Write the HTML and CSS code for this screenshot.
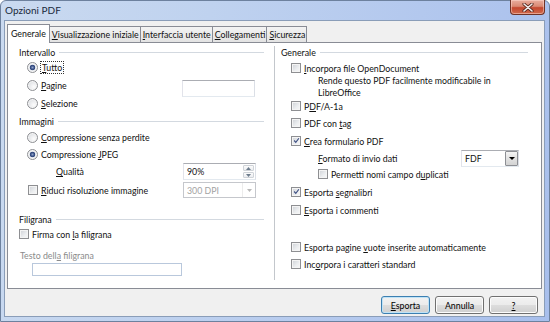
FILE: index.html
```html
<!DOCTYPE html>
<html lang="it">
<head>
<meta charset="utf-8">
<title>Opzioni PDF</title>
<link rel="stylesheet" href="styles.css">
</head>
<body>
<div class="window">
  <div class="titlebar">
    <span class="title">Opzioni PDF</span>
    <div class="close">
      <svg width="12" height="9" viewBox="0 0 12 9"><path d="M2 1 L10 8 M10 1 L2 8" stroke="#5a2a20" stroke-width="3.2" stroke-linecap="round"/><path d="M2 1 L10 8 M10 1 L2 8" stroke="#f4eeee" stroke-width="1.6" stroke-linecap="round"/></svg>
    </div>
  </div>
  <div class="client">
    <div class="tabs">
      <div class="tab active">Generale</div>
      <div class="tab"><u>V</u>isualizzazione iniziale</div>
      <div class="tab"><u>I</u>nterfaccia utente</div>
      <div class="tab"><u>C</u>ollegamenti</div>
      <div class="tab"><u>S</u>icurezza</div>
    </div>
    <div class="panel">
      <div class="col left">
        <div class="hdr"><span>Intervallo</span><i class="line"></i></div>
        <div class="row in8"><span class="radio on"></span><span class="focus"><u>T</u>utto</span></div>
        <div class="row in8"><span class="radio"></span><span><u>P</u>agine</span><span class="field pages"></span></div>
        <div class="row in8"><span class="radio"></span><span><u>S</u>elezione</span></div>

        <div class="hdr h-img"><span>Immagini</span><i class="line"></i></div>
        <div class="row in8 r-comp"><span class="radio"></span><span><u>C</u>ompressione senza perdite</span></div>
        <div class="row in8 h16"><span class="radio on"></span><span>Compressione <u>J</u>PEG</span></div>
        <div class="row r-qual"><span class="qlabel"><u>Q</u>ualità</span>
          <span class="field spin"><span class="val">90%</span><span class="spinbtns"><span class="sb"><svg width="5" height="3" viewBox="0 0 5 3"><path d="M0 3 L2.5 0 L5 3Z" fill="#6d7c8c"/></svg></span><span class="sb"><svg width="5" height="3" viewBox="0 0 5 3"><path d="M0 0 L2.5 3 L5 0Z" fill="#6d7c8c"/></svg></span></span></span>
        </div>
        <div class="row in9"><span class="check"></span><span><u>R</u>iduci risoluzione immagine</span>
          <span class="field combo dis"><span class="val">300 DPI</span><span class="arr"><svg width="5" height="3" viewBox="0 0 5 3"><path d="M0 0 L2.5 3 L5 0Z" fill="#b8b8b8"/></svg></span></span>
        </div>

        <div class="hdr h-fil"><span>Filigrana</span><i class="line"></i></div>
        <div class="row h16 r-firma"><span class="check"></span><span>Firma con <u>l</u>a filigrana</span></div>
        <div class="row h14 r-testo grey"><span>Testo dell<u>a</u> filigrana</span></div>
        <div class="field wm"></div>
      </div>
      <div class="vsep"></div>
      <div class="col right">
        <div class="hdr"><span>Generale</span><i class="line"></i></div>
        <div class="row in10 h16 r-inc"><span class="check"></span><span><u>I</u>ncorpora file OpenDocument</span></div>
        <div class="desc">Rende questo PDF facilmente modificabile in<br>LibreOffice</div>
        <div class="row in10 h16 r-pdfa"><span class="check"></span><span>P<u>D</u>F/A-1a</span></div>
        <div class="row in10"><span class="check"></span><span>PDF con <u>t</u>ag</span></div>
        <div class="row in10"><span class="check on"><svg width="9" height="9" viewBox="0 0 9 9"><path d="M1.5 4.5 L3.6 6.8 L7.6 1.6" fill="none" stroke="#3d4f82" stroke-width="1.5"/></svg></span><span><u>C</u>rea formulario PDF</span></div>
        <div class="row h16 in37"><span><u>F</u>ormato di invio dati</span>
          <span class="field combo fdf"><span class="val">FDF</span><span class="arr btn"><svg width="6" height="3" viewBox="0 0 6 3"><path d="M0 0 L3 3 L6 0Z" fill="#000"/></svg></span></span>
        </div>
        <div class="row h16 in37"><span class="check"></span><span>Permetti nomi campo d<u>u</u>plicati</span></div>
        <div class="row in10 r-seg"><span class="check on"><svg width="9" height="9" viewBox="0 0 9 9"><path d="M1.5 4.5 L3.6 6.8 L7.6 1.6" fill="none" stroke="#3d4f82" stroke-width="1.5"/></svg></span><span>Esporta <u>s</u>egnalibri</span></div>
        <div class="row in10"><span class="check"></span><span><u>E</u>sporta i commenti</span></div>
        <div class="row in10 r-vuote"><span class="check"></span><span>Esporta pagine <u>v</u>uote inserite automaticamente</span></div>
        <div class="row in10 h16"><span class="check"></span><span>Inc<u>o</u>rpora i caratteri standard</span></div>
      </div>
    </div>
    <div class="buttons">
      <button class="btn-w default"><u>E</u>sporta</button>
      <button class="btn-w">Annulla</button>
      <button class="btn-w"><u>?</u></button>
    </div>
  </div>
</div>
</body>
</html>
```

FILE: styles.css
```css
* { box-sizing: border-box; }
html, body { margin: 0; padding: 0; }
body {
  width: 550px;
  height: 322px;
  overflow: hidden;
  font-family: Lato, "Open Sans", sans-serif;
  font-size: 8.8px;
  color: #111;
  background: #fff;
}
u { text-decoration: underline; text-underline-offset: 1px; }

.window {
  width: 550px;
  height: 322px;
  border: 1px solid #6d819e;
  border-radius: 6px 6px 0 0;
  background: linear-gradient(100deg, #cadaf0 0%, #bfd2ef 35%, #b3c8ee 70%, #a8bfec 100%);
  display: flex;
  flex-direction: column;
}

.titlebar {
  height: 19px;
  display: flex;
  align-items: flex-start;
  padding-left: 4px;
}
.title {
  font-size: 10px;
  line-height: 19px;
  color: #1b2a3c;
}
.close {
  margin-left: auto;
  margin-right: 4px;
  margin-top: -1px;
  width: 35px;
  height: 15px;
  border: 1px solid #6e3226;
  border-top: none;
  border-radius: 0 0 4px 4px;
  background: linear-gradient(#e9ad9e 0%, #da8a74 45%, #c4472f 55%, #cf6a4c 100%);
  box-shadow: inset 0 0 0 1px rgba(255,220,210,0.5);
  display: flex;
  align-items: center;
  justify-content: center;
}

.client {
  margin: 0 4px 0 3px;
  height: 297px;
  border: 1px solid #8a9db8;
  background: #f0f0f0;
  display: flex;
  flex-direction: column;
}

.tabs {
  display: flex;
  align-items: flex-end;
  height: 21px;
  padding: 3px 0 0 2px;
}
.tab {
  height: 16px;
  padding: 0 1px 0 2px;
  border: 1px solid #898c95;
  border-bottom: none;
  border-left: none;
  background: linear-gradient(#f3f3f3, #e3e3e3);
  line-height: 15px;
  white-space: nowrap;
}
.tab.active {
  position: relative;
  z-index: 1;
  height: 19px;
  margin-bottom: -1px;
  border-left: 1px solid #898c95;
  padding: 0 3px;
  background: #fff;
  line-height: 18px;
}

.panel {
  margin: 0 2px 0 2px;
  height: 247px;
  border: 1px solid #898c95;
  background: #fff;
  display: flex;
}
.col { display: flex; flex-direction: column; }
.col.left { width: 266px; padding: 3px 10px 0 11px; }
.col.right { flex: 1; padding: 3px 13px 0 6px; }
.vsep { width: 1px; background: #c3c7cc; margin: 3px 0 8px; }

.hdr {
  height: 12px;
  display: flex;
  align-items: center;
  white-space: nowrap;
}
.hdr .line {
  flex: 1;
  height: 1px;
  background: #d3d9e0;
  margin-left: 4px;
}
.h-img { margin-top: 3px; }
.h-fil { margin-top: 14px; }

.row {
  height: 18px;
  display: flex;
  align-items: center;
  white-space: nowrap;
}
.h16 { height: 16px; }
.h14 { height: 14px; }
.in8 { padding-left: 8px; }
.in9 { padding-left: 9px; }
.in10 { padding-left: 10px; }
.in37 { padding-left: 37px; }
.r-comp { margin-top: 1px; }
.r-qual { margin-top: 1px; align-items: flex-start; }
.r-firma { margin-top: 1px; }
.r-testo { margin-top: 6px; padding-left: 1px; }
.r-inc { margin-top: 2px; }
.r-pdfa { margin-top: -1px; }
.r-seg { margin-top: 1px; }
.r-vuote { margin-top: 19px; }
.grey { color: #8b8b8b; }

.radio {
  width: 11px;
  height: 11px;
  border-radius: 50%;
  border: 1px solid #8e9094;
  background: radial-gradient(circle at 65% 65%, #fdfdfd 0%, #e4e6e9 60%, #cfd3d8 100%);
  box-shadow: inset 0 0 0 1px #f6f6f6;
  margin-right: 3px;
  flex: none;
}
.radio.on {
  background: radial-gradient(circle, #8fa3c9 0%, #3b5288 28%, #2f4478 40%, #e6e9ee 48%, #f6f6f6 100%);
}
.check {
  width: 10px;
  height: 10px;
  border: 1px solid #8e8f92;
  background: linear-gradient(135deg, #cdd0d5 0%, #eceef0 60%, #f8f8f8 100%);
  box-shadow: inset 0 0 0 1px #f4f4f4;
  margin-right: 3px;
  flex: none;
  display: flex;
  align-items: center;
  justify-content: center;
}
.check svg { margin-top: -1px; margin-left: 1px; }
.focus { outline: 1px dotted #333; outline-offset: 0; padding: 0 1px; line-height: 11px; }

.field {
  display: flex;
  background: #fff;
  border: 1px solid #abadb3;
  border-color: #abadb3 #dbdfe6 #e3e9ef #e2e3ea;
}
.pages {
  margin-left: auto;
  margin-right: 9px;
  width: 73px;
  height: 17px;
  align-self: flex-start;
  margin-top: 4px;
}
.qlabel { margin-left: 37px; margin-top: 3px; }
.spin {
  margin-left: auto;
  margin-right: 8px;
  width: 73px;
  height: 17px;
  align-items: center;
}
.val { flex: 1; padding-left: 3px; line-height: 13px; }
.spinbtns {
  width: 11px;
  height: 13px;
  margin-right: 1px;
  display: flex;
  flex-direction: column;
  gap: 1px;
}
.sb {
  flex: 1;
  border: 1px solid #cfd3d8;
  border-radius: 1px;
  background: linear-gradient(#fbfbfb, #eceef1);
  display: flex;
  align-items: center;
  justify-content: center;
}
.combo { height: 16px; align-items: center; }
.dis {
  margin-left: auto;
  margin-right: 8px;
  width: 73px;
  border-color: #c5c7cc;
  color: #a3a3a3;
}
.arr {
  width: 13px;
  height: 14px;
  display: flex;
  align-items: center;
  justify-content: center;
  border-left: 1px solid #ececec;
}
.fdf {
  margin-left: auto;
  margin-right: 9px;
  width: 58px;
  height: 17px;
}
.arr.btn {
  height: 15px;
  border: 1px solid #8d8f94;
  border-radius: 1px;
  background: linear-gradient(#f4f4f4, #e2e2e2 50%, #d3d3d3);
  width: 13px;
}

.desc {
  padding-left: 37px;
  line-height: 12px;
  margin-top: -1px;
  white-space: nowrap;
}

.wm {
  margin: 1px 0 0 13px;
  width: 150px;
  height: 13px;
  border-color: #b9c8dc;
}

.buttons {
  display: flex;
  justify-content: flex-end;
  gap: 5px;
  padding: 7px 6px 0 0;
}
.btn-w {
  width: 49px;
  height: 18px;
  padding: 0;
  font: inherit;
  color: #000;
  border: 1px solid #707070;
  border-radius: 3px;
  background: linear-gradient(#f2f2f2 0%, #ebebeb 50%, #dddddd 51%, #cfcfcf 100%);
  box-shadow: inset 0 0 0 1px #fcfcfc;
}
.btn-w.default {
  border-color: #3c7fb1;
  box-shadow: inset 0 0 0 1px #bfe3f7;
}
```
